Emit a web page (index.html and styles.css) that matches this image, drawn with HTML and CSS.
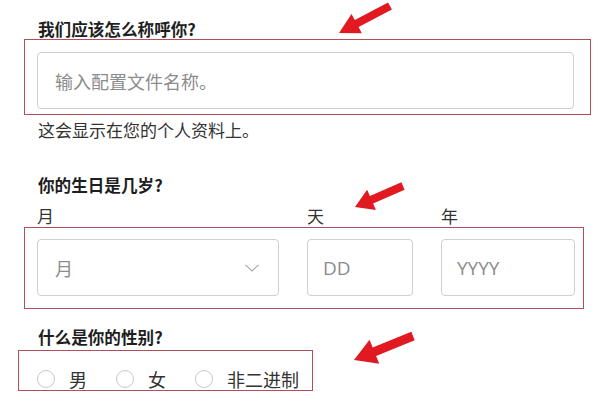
FILE: index.html
```html
<!DOCTYPE html>
<html lang="zh-CN">
<head>
<meta charset="utf-8">
<title>个人资料</title>
<link rel="stylesheet" href="styles.css">
</head>
<body>
<main class="form">
  <h2 class="q">我们应该怎么称呼你?</h2>
  <div class="mark mark-name">
    <input class="field" type="text" placeholder="输入配置文件名称。">
  </div>
  <p class="hint">这会显示在您的个人资料上。</p>

  <h2 class="q q2">你的生日是几岁?</h2>
  <div class="dob-grid dob-labels">
    <span>月</span><span>天</span><span>年</span>
  </div>
  <div class="mark mark-dob">
    <div class="dob-grid">
      <div class="field select">
        <span>月</span>
        <svg class="chev" width="14" height="8" viewBox="0 0 14 8"><polyline points="0.5,0.8 7,7 13.5,0.8" fill="none" stroke="#a9a9a9" stroke-width="1.1"/></svg>
      </div>
      <input class="field latin" type="text" placeholder="DD">
      <input class="field latin" type="text" placeholder="YYYY">
    </div>
  </div>

  <h2 class="q q3">什么是你的性别?</h2>
  <div class="mark mark-gender">
    <label class="opt"><span class="dot"></span>男</label>
    <label class="opt"><span class="dot"></span>女</label>
    <label class="opt"><span class="dot"></span>非二进制</label>
  </div>
</main>

<svg class="arrows" width="600" height="402" viewBox="0 0 600 402">
  <polygon points="388.1,2.5 354.8,20.1 351.5,13.9 339,33 361.8,33.3 358.6,27.1 391.9,9.5"/>
  <polygon points="401.4,182.3 369.9,196.1 367.1,189.7 355,207 375.9,209.9 373.1,203.5 404.6,189.7"/>
  <polygon points="411.3,331.8 372.7,347.5 369.5,339.7 354,360 379.3,363.7 376.1,355.9 414.7,340.2"/>
</svg>
</body>
</html>
```

FILE: styles.css
```css
html, body {
  margin: 0;
  background: #ffffff;
}

body {
  position: relative;
  width: 600px;
  height: 402px;
  overflow: hidden;
  font-family: "Noto Sans CJK SC", "Noto Sans", "Liberation Sans", sans-serif;
  color: #222222;
}

.form {
  padding: 19px 0 0 24px;
}

.q {
  margin: 0 0 0 14px;
  font-size: 16.6px;
  line-height: 20px;
  font-weight: 700;
  color: #1e1e1e;
  white-space: nowrap;
}

.q2 {
  margin-top: 35px;
}

.q3 {
  margin-top: 18px;
}

.mark {
  box-sizing: border-box;
  border: 1px solid #b24e56;
}

.mark-name {
  width: 567px;
  padding: 12px 16px 5px 12px;
}

.field {
  box-sizing: border-box;
  display: flex;
  align-items: center;
  width: 100%;
  height: 57px;
  margin: 0;
  padding: 0 0 0 16px;
  border: 1px solid #cfcfcf;
  border-radius: 4px;
  background: #ffffff;
  font-family: "Noto Sans CJK SC", "Noto Sans", sans-serif;
  font-size: 17px;
  color: #8c8c8c;
  outline: none;
}

.mark-name .field {
  padding-left: 17px;
  font-size: 18px;
}

.field.latin {
  font-family: "Open Sans", "Noto Sans", sans-serif;
  font-size: 19px;
  padding-left: 15px;
}

.field::placeholder {
  color: #8c8c8c;
  opacity: 1;
}

.hint {
  margin: 5px 0 0 14px;
  font-size: 17px;
  line-height: 20px;
  color: #333333;
  white-space: nowrap;
}

.dob-grid {
  display: grid;
  grid-template-columns: 242px 106px 134px;
  column-gap: 28px;
}

.dob-labels {
  margin: 11px 0 1px 13px;
  font-size: 17px;
  line-height: 20px;
  color: #333333;
}

.mark-dob {
  width: 560px;
  padding: 11px 0 12px 12px;
}

.select {
  justify-content: space-between;
  padding-left: 17px;
  padding-right: 19px;
  font-size: 18px;
}

.chev {
  display: block;
}

.mark-gender {
  display: flex;
  align-items: center;
  width: 295px;
  height: 41px;
  margin: 3px 0 0 -6px;
  padding: 16px 0 0 18px;
}

.opt {
  display: flex;
  flex-shrink: 0;
  align-items: center;
  gap: 14px;
  margin-right: 29px;
  font-size: 18px;
  line-height: 22px;
  color: #333333;
  white-space: nowrap;
}

.opt:last-child {
  margin-right: 0;
}

.dot {
  box-sizing: border-box;
  flex-shrink: 0;
  width: 18px;
  height: 18px;
  border: 1px solid #c9c9c9;
  border-radius: 50%;
  background: #ffffff;
}

.arrows {
  position: absolute;
  top: 0;
  left: 0;
  pointer-events: none;
  fill: #e01a20;
}
```
